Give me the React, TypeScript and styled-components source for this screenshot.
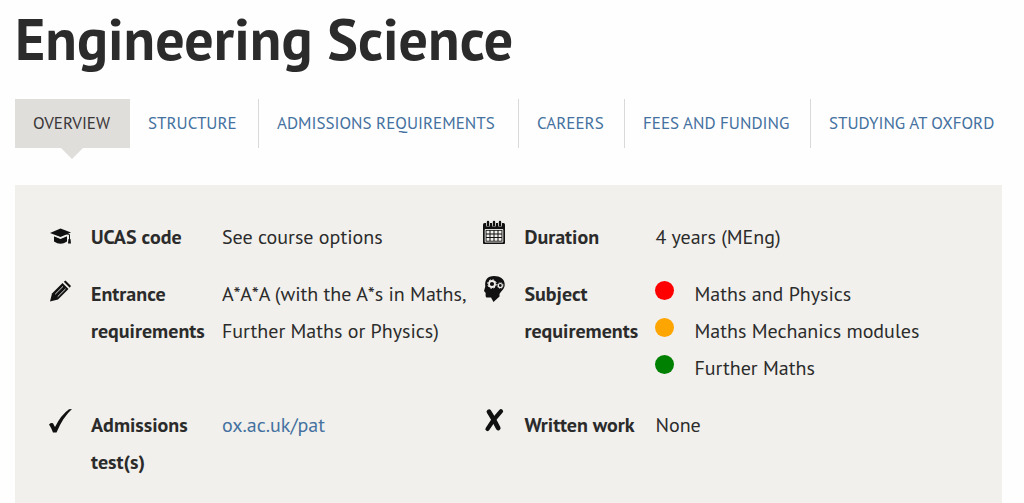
import React from "react";
import styled, { createGlobalStyle } from "styled-components";

const GlobalStyle = createGlobalStyle`
  * { box-sizing: border-box; }
  body {
    margin: 0;
    background: #fefefe;
    color: #2b2b2b;
    font-family: "PT Sans", Lato, "Liberation Sans", sans-serif;
    font-size: 20px;
    line-height: 37px;
  }
`;

const Page = styled.main`
  display: flex;
  flex-direction: column;
  min-height: 100vh;
  padding: 6px 22px 0 15px;
`;

const Title = styled.h1`
  margin: 0;
  font-size: 58px;
  line-height: 66px;
  font-weight: 700;
`;

const Tabs = styled.nav`
  display: grid;
  grid-template-columns: 115fr 129fr 260fr 106fr 186fr 191fr;
  margin: 27px 0 37px;
`;

const Tab = styled.a<{ $active?: boolean; $divided?: boolean }>`
  position: relative;
  height: 49px;
  padding-left: 18px;
  line-height: 49px;
  font-size: 17px;
  text-transform: uppercase;
  text-decoration: none;
  white-space: nowrap;
  color: ${(p) => (p.$active ? "#3a3638" : "#44719f")};
  background: ${(p) => (p.$active ? "#dfdedb" : "transparent")};
  border-right: ${(p) => (p.$divided ? "1px solid #d9d9d9" : "0")};
`;

const Pointer = styled.span`
  position: absolute;
  top: 100%;
  left: 50%;
  margin-left: -12px;
  border: 11px solid transparent;
  border-top-color: #dfdedb;
  border-bottom: 0;
`;

const Panel = styled.section`
  flex: 1;
  padding: 34px 0 22px 34px;
  background: #f1f0ec;
`;

const Facts = styled.dl`
  display: grid;
  grid-template-columns: 433fr 519fr;
  row-gap: 20px;
  margin: 0;
`;

const Fact = styled.div`
  display: grid;
  grid-template-columns: 42px 131px 1fr;
  align-items: start;
`;

const Icon = styled.svg`
  display: block;
  width: 24px;
  height: 28px;
  fill: #111;
`;

const Term = styled.dt`
  font-weight: 700;
  padding-right: 12px;
`;

const Detail = styled.dd`
  margin: 0;
`;

const TextLink = styled.a`
  color: #44719f;
  text-decoration: none;
`;

const Subjects = styled.ul`
  margin: 0;
  padding: 0;
  list-style: none;
`;

const Subject = styled.li`
  display: flex;
  gap: 20px;
`;

const Dot = styled.span<{ $color: string }>`
  width: 19px;
  height: 19px;
  margin-top: 5px;
  border-radius: 50%;
  background: ${(p) => p.$color};
`;

const tabs = [
  { label: "Overview", active: true },
  { label: "Structure", divided: true },
  { label: "Admissions requirements", divided: true },
  { label: "Careers", divided: true },
  { label: "Fees and funding", divided: true },
  { label: "Studying at Oxford" },
];

const subjects = [
  { name: "Maths and Physics", color: "#ff0000" },
  { name: "Maths Mechanics modules", color: "#ffa500" },
  { name: "Further Maths", color: "#008000" },
];

const CapIcon = () => (
  <Icon viewBox="0 0 24 28" aria-hidden="true">
    <path d="M1 14 11.500 9.500 22 13.500 11.500 18Z" />
    <path d="M5 17.200 11.500 20 18 17.200V22.500Q11.500 27 5 22.500Z" />
    <path d="M11.500 13.500 20.500 15.500V23" fill="none" stroke="#111" strokeWidth="1" />
    <path d="M19.500 20h2l.5 4.500h-3Z" />
    <path d="M5 16.500 11.500 19 18 16.500" fill="none" stroke="#f1f0ec" strokeWidth=".8" />
  </Icon>
);

const PencilIcon = () => (
  <Icon viewBox="0 0 24 28" aria-hidden="true">
    <path d="M1 25.500 3 17.500 13.500 7 19.500 13 9 23.500Z" />
    <path d="M14.800 5.800 16.500 4.500 22 10 20.700 11.700Z" />
    <path d="M6.200 18.200 14 10.400M8.700 20.700 16.500 12.900" stroke="#f1f0ec" strokeWidth=".9" />
  </Icon>
);

const CheckIcon = () => (
  <Icon viewBox="0 0 24 28" aria-hidden="true">
    <path d="M0 17.500Q2 15.500 4 16.300L6 20Q12 8 20 2.300L23 2Q14 10 7.500 25.500H4Q2.500 21 0 17.500Z" />
  </Icon>
);

const CalendarIcon = () => (
  <Icon viewBox="0 0 24 28" aria-hidden="true">
    <path d="M1 5.500Q1 4 2.500 4h19Q23 4 23 5.500V24Q23 25 22 25H2Q1 25 1 24Z" />
    <path d="M6 2v4M12 2v4M18 2v4" stroke="#f1f0ec" strokeWidth="4" strokeLinecap="round" />
    <path d="M6 3v3.500M12 3v3.500M18 3v3.500" stroke="#111" strokeWidth="2.400" strokeLinecap="round" />
    <rect x="2.700" y="10" width="18.600" height="13.500" rx="1" fill="#f1f0ec" />
    <rect x="3.600" y="10.900" width="16.800" height="11.700" />
    <path
      d="M4.500 11.700h3v2.700h-3zM8.500 11.700h3v2.700h-3zM12.500 11.700h3v2.700h-3zM16.500 11.700h3v2.700h-3zM4.500 15.400h3v2.700h-3zM8.500 15.400h3v2.700h-3zM12.500 15.400h3v2.700h-3zM16.500 15.400h3v2.700h-3zM4.500 19.100h3v2.700h-3zM8.500 19.100h3v2.700h-3zM12.500 19.100h3v2.700h-3zM16.500 19.100h3v2.700h-3z"
      fill="#f1f0ec"
    />
  </Icon>
);

const HeadIcon = () => (
  <Icon viewBox="0 0 24 28" aria-hidden="true">
    <path d="M12 0C18 0 23 3 22.700 9C22.500 13 19 15.500 17.500 18V20.500L11.500 26 9 21.500H4.500Q3.300 21 3.700 17L2 15 3.300 10.500C2.500 4 5.500 0 12 0Z" />
    <circle cx="10" cy="8" r="3" fill="none" stroke="#f1f0ec" strokeWidth="1.800" />
    <circle cx="10" cy="8" r="4.300" fill="none" stroke="#f1f0ec" strokeWidth="1" strokeDasharray="1.700 1.677" />
    <circle cx="18.300" cy="9.500" r="2" fill="none" stroke="#f1f0ec" strokeWidth="1.200" />
    <circle cx="18.300" cy="9.500" r="2.900" fill="none" stroke="#f1f0ec" strokeWidth=".7" strokeDasharray="1.150 1.128" />
  </Icon>
);

const CrossIcon = () => (
  <Icon viewBox="0 0 24 28" aria-hidden="true">
    <path d="M7 4.800Q11 11 16.200 21" fill="none" stroke="#111" strokeWidth="4.800" strokeLinecap="round" />
    <path d="M19 4.200Q11 12.500 5.500 22" fill="none" stroke="#111" strokeWidth="4.200" strokeLinecap="round" />
  </Icon>
);

export default function App() {
  return (
    <Page>
      <GlobalStyle />
      <Title>Engineering Science</Title>
      <Tabs aria-label="Course sections">
        {tabs.map((t) => (
          <Tab key={t.label} href="#" $active={t.active} $divided={t.divided}>
            {t.label}
            {t.active && <Pointer />}
          </Tab>
        ))}
      </Tabs>
      <Panel>
        <Facts>
          <Fact>
            <CapIcon />
            <Term>UCAS code</Term>
            <Detail>See course options</Detail>
          </Fact>
          <Fact>
            <CalendarIcon />
            <Term>Duration</Term>
            <Detail>4 years (MEng)</Detail>
          </Fact>
          <Fact>
            <PencilIcon />
            <Term>Entrance requirements</Term>
            <Detail>A*A*A (with the A*s in Maths, Further Maths or Physics)</Detail>
          </Fact>
          <Fact>
            <HeadIcon />
            <Term>Subject requirements</Term>
            <Detail>
              <Subjects>
                {subjects.map((s) => (
                  <Subject key={s.name}>
                    <Dot $color={s.color} />
                    {s.name}
                  </Subject>
                ))}
              </Subjects>
            </Detail>
          </Fact>
          <Fact>
            <CheckIcon />
            <Term>Admissions test(s)</Term>
            <Detail>
              <TextLink href="#">ox.ac.uk/pat</TextLink>
            </Detail>
          </Fact>
          <Fact>
            <CrossIcon />
            <Term>Written work</Term>
            <Detail>None</Detail>
          </Fact>
        </Facts>
      </Panel>
    </Page>
  );
}
